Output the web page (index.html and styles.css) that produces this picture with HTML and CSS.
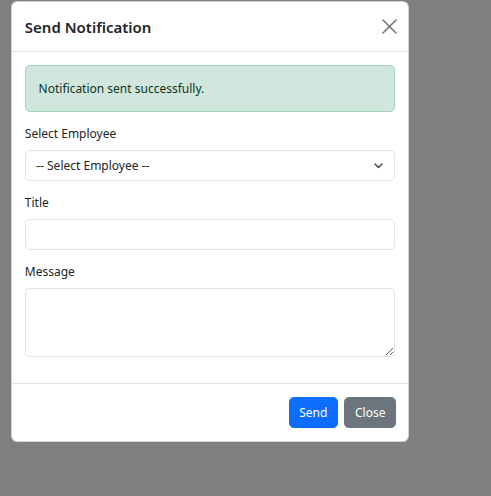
FILE: index.html
```html
<!DOCTYPE html>
<html lang="en">
<head>
<meta charset="utf-8">
<title>Send Notification</title>
<link rel="stylesheet" href="styles.css">
</head>
<body>
<div class="modal">
  <div class="modal-header">
    <h5 class="modal-title">Send Notification</h5>
    <button class="btn-close" type="button" aria-label="Close">
      <svg width="15" height="15" viewBox="0 0 15 15"><path d="M1 1L14 14M14 1L1 14" stroke="#6e7175" stroke-width="1.5" fill="none" stroke-linecap="round"/></svg>
    </button>
  </div>
  <div class="modal-body">
    <div class="alert">Notification sent successfully.</div>
    <div class="field">
      <label class="form-label">Select Employee</label>
      <div class="select-wrap">
        <select class="form-control select"><option>-- Select Employee --</option></select>
        <svg class="chevron" width="9" height="6" viewBox="0 0 9 6"><path d="M1 1L4.5 4.5L8 1" stroke="#343a40" stroke-width="1.3" fill="none" stroke-linecap="round" stroke-linejoin="round"/></svg>
      </div>
    </div>
    <div class="field">
      <label class="form-label">Title</label>
      <input class="form-control" type="text">
    </div>
    <div class="field">
      <label class="form-label">Message</label>
      <textarea class="form-control textarea" rows="3"></textarea>
    </div>
  </div>
  <div class="modal-footer">
    <button class="btn btn-primary" type="button">Send</button>
    <button class="btn btn-secondary" type="button">Close</button>
  </div>
</div>
</body>
</html>
```
FILE: styles.css
```css
* { box-sizing: border-box; }
html, body { margin: 0; padding: 0; }
body {
  background: #7f7f7f;
  font-family: "Segoe UI", "Noto Sans", "Open Sans", sans-serif;
  font-size: 12px;
  line-height: 19.2px;
  color: #212529;
  padding: 1px 0 0 11px;
  height: 496px;
}
.modal {
  width: 398px;
  background: #fff;
  border: 1px solid rgba(0,0,0,0.175);
  border-radius: 6.4px;
  display: flex;
  flex-direction: column;
}
.modal-header {
  display: flex;
  align-items: center;
  justify-content: space-between;
  padding: 12.8px 11px 12.8px 12.8px;
  border-bottom: 1px solid #dee2e6;
  height: 50px;
}
.modal-title {
  margin: 0;
  font-size: 15px;
  font-weight: 600;
  line-height: 22px;
  color: #212529;
}
.btn-close {
  border: 0;
  background: transparent;
  padding: 0;
  width: 16px;
  height: 16px;
  display: flex;
  align-items: center;
  justify-content: center;
}
.modal-body {
  padding: 12.8px 12.8px 13.6px;
}
.alert {
  background: #d1e7dd;
  border: 1px solid #a3cfbb;
  color: #0a3622;
  border-radius: 4.8px;
  padding: 12.8px;
  margin-bottom: 12.8px;
}
.field { margin-bottom: 12.8px; }
.form-label {
  display: block;
  margin-bottom: 6.4px;
}
.form-control {
  display: block;
  width: 100%;
  font-family: inherit;
  font-size: 12px;
  line-height: 19.2px;
  color: #212529;
  background: #fff;
  border: 1px solid #dee2e6;
  border-radius: 4.8px;
  padding: 4.6px 10.4px;
  height: 30.6px;
  outline: none;
}
.select-wrap { position: relative; }
.select {
  appearance: none;
  -webkit-appearance: none;
  padding-right: 30px;
}
.chevron {
  position: absolute;
  right: 12px;
  top: 13px;
  pointer-events: none;
}
.textarea {
  height: 68.8px;
  resize: vertical;
}
.modal-footer {
  display: flex;
  justify-content: flex-end;
  align-items: center;
  border-top: 1px solid #dee2e6;
  padding: 10px 8.8px 9.6px 9.6px;
}
.btn {
  font-family: inherit;
  font-size: 12px;
  line-height: 19.2px;
  color: #fff;
  border: 1px solid transparent;
  border-radius: 4.8px;
  padding: 4.6px 9.6px;
  height: 31px;
  margin: 3.2px;
}
.btn-primary { background: #0d6efd; border-color: #0d6efd; }
.btn-secondary { background: #6c757d; border-color: #6c757d; }
```
